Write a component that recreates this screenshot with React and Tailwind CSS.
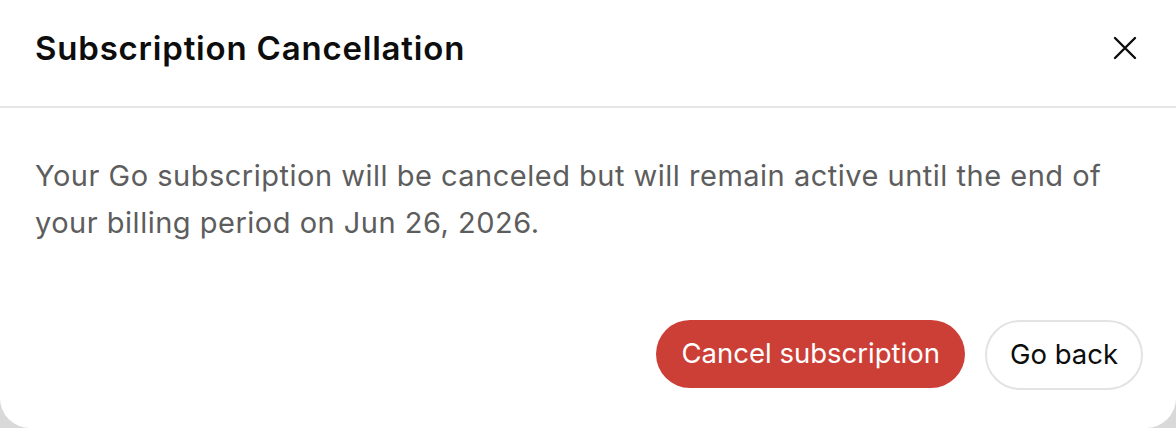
import React from "react";

const App = () => {
  return (
    <div className="h-[428px] w-[1176px] bg-[#d9d9d9] font-['Inter',sans-serif]">
      <div className="flex h-full flex-col rounded-b-[30px] bg-white">
        {/* Header */}
        <div className="flex h-[108px] items-start justify-between border-b-2 border-[#e6e6e6] pl-[35px] pr-[35px] pt-[28px]">
          <h2 className="text-[33px] font-semibold leading-[40px] tracking-[0.8px] text-[#0d0d0d]">
            Subscription Cancellation
          </h2>
          <button className="mt-[4px] flex h-8 w-8 items-center justify-center text-[#0d0d0d]">
            <svg width="24" height="24" viewBox="0 0 24 24" fill="none" stroke="currentColor" strokeWidth="2.4" strokeLinecap="round">
              <path d="M2 2L22 22M22 2L2 22" />
            </svg>
          </button>
        </div>

        {/* Body */}
        <div className="px-[35px] pt-[44px]">
          <p className="text-[29px] leading-[47px] tracking-[0.5px] text-[#5d5d5d]">
            Your Go subscription will be canceled but will remain active until the end of your billing period on Jun 26, 2026.
          </p>
        </div>

        {/* Actions */}
        <div className="mt-[74px] flex justify-end gap-[20px] pr-[33px]">
          <button className="h-[68px] rounded-full bg-[#cc3f37] px-[25px] text-[27.5px] text-white">
            Cancel subscription
          </button>
          <button className="h-[70px] rounded-full border-2 border-[#e3e3e3] px-[23px] text-[27.5px] text-[#0d0d0d]">
            Go back
          </button>
        </div>
      </div>
    </div>
  );
};

export default App;
